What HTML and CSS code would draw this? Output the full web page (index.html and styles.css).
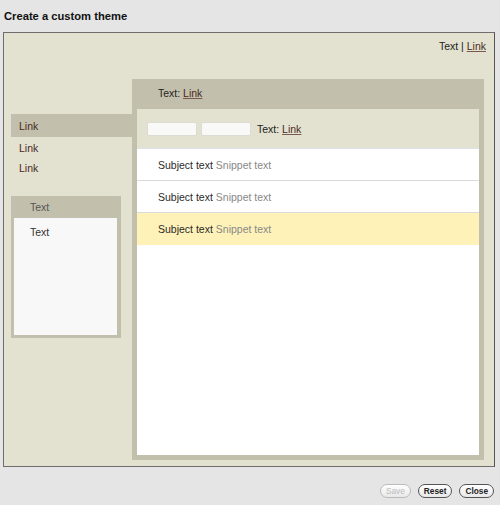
FILE: index.html
```html
<!DOCTYPE html>
<html>
<head>
<meta charset="utf-8">
<link rel="stylesheet" href="styles.css">
</head>
<body>
<div class="title">Create a custom theme</div>
<div class="frame">
  <div class="topbar">Text | <a class="lnk">Link</a></div>
  <div class="content">
    <div class="leftcol">
      <div class="nav">
        <div class="nav-item selected"><a class="lnk plain">Link</a></div>
        <div class="nav-item"><a class="lnk plain">Link</a></div>
        <div class="nav-item"><a class="lnk plain">Link</a></div>
      </div>
      <div class="box">
        <div class="box-head">Text</div>
        <div class="box-body">Text</div>
      </div>
    </div>
    <div class="panel">
      <div class="panel-head">Text: <a class="lnk">Link</a></div>
      <div class="panel-inner">
        <div class="toolbar">
          <span class="inp"></span>
          <span class="inp"></span>
          <span class="tb-text">Text: <a class="lnk">Link</a></span>
        </div>
        <div class="list">
          <div class="row"><span class="subj">Subject text</span> <span class="snip">Snippet text</span></div>
          <div class="row"><span class="subj">Subject text</span> <span class="snip">Snippet text</span></div>
          <div class="row hl"><span class="subj">Subject text</span> <span class="snip">Snippet text</span></div>
        </div>
      </div>
    </div>
  </div>
</div>
<div class="footer">
  <span class="btn disabled">Save</span>
  <span class="btn">Reset</span>
  <span class="btn">Close</span>
</div>
</body>
</html>
```

FILE: styles.css
```css
html, body {
  margin: 0;
  padding: 0;
}
body {
  background: #e5e5e5;
  font-family: "Liberation Sans", Arial, sans-serif;
  font-size: 10.5px;
  color: #222;
  width: 500px;
  height: 505px;
  overflow: hidden;
}
.title {
  height: 32px;
  box-sizing: border-box;
  padding: 10px 0 0 4px;
  font-size: 11.2px;
  font-weight: bold;
  color: #111;
}
.frame {
  margin-left: 3px;
  width: 492px;
  height: 435px;
  box-sizing: border-box;
  border: 1px solid #6e6e6e;
  border-right-color: #555;
  background: #e3e1cf;
  display: flex;
  flex-direction: column;
}
.topbar {
  height: 46px;
  box-sizing: border-box;
  padding: 7px 8px 0 0;
  text-align: right;
  color: #222;
}
.lnk {
  color: #4a2b1f;
  text-decoration: underline;
  text-decoration-color: #7a5a4e;
}
.lnk.plain {
  text-decoration: none;
}
.content {
  display: flex;
  flex: 1;
  padding-left: 7px;
}
.leftcol {
  width: 121px;
  display: flex;
  flex-direction: column;
  padding-top: 35px;
}
.nav-item {
  height: 20px;
  line-height: 20px;
  padding-left: 8px;
}
.nav-item.selected {
  height: 23px;
  line-height: 24px;
  background: #c2c0ac;
  margin-bottom: 1px;
}
.box {
  margin-top: 18px;
  width: 110px;
  height: 142px;
  box-sizing: border-box;
  background: #c2c0ac;
  padding: 0 4px 3px 3px;
  display: flex;
  flex-direction: column;
}
.box-head {
  height: 22px;
  line-height: 23px;
  padding-left: 16px;
  color: #555;
}
.box-body {
  flex: 1;
  background: #f8f8f8;
  padding: 8px 0 0 16px;
  color: #333;
}
.panel {
  width: 352px;
  height: 381px;
  box-sizing: border-box;
  background: #c2c0ac;
  padding: 0 5px 5px;
  display: flex;
  flex-direction: column;
}
.panel-head {
  height: 30px;
  line-height: 29px;
  padding-left: 21px;
}
.panel-inner {
  flex: 1;
  display: flex;
  flex-direction: column;
  background: #fff;
}
.toolbar {
  height: 40px;
  background: #e3e1cf;
  border-bottom: 1px solid #dbe4ea;
  display: flex;
  align-items: center;
  padding-left: 10px;
  padding-top: 1px;
  box-sizing: border-box;
  gap: 4px;
}
.inp {
  width: 48px;
  height: 12px;
  background: #f9f9f7;
  border: 1px solid #dcdcd4;
  border-radius: 2px;
}
.tb-text {
  margin-left: 2px;
}
.row {
  height: 31px;
  line-height: 32px;
  border-bottom: 1px solid #dadada;
  padding-left: 21px;
}
.row.hl {
  background: #fff2b8;
  border-bottom-color: #fff2b8;
}
.subj {
  color: #2a2a2a;
}
.snip {
  color: #888;
}
.footer {
  display: flex;
  justify-content: flex-end;
  gap: 7px;
  padding: 17px 6px 0 0;
}
.btn {
  height: 12px;
  line-height: 12px;
  padding: 0 5px;
  border: 1px solid #555;
  border-radius: 7px;
  background: linear-gradient(#ffffff, #e8e8e8);
  font-size: 8.3px;
  font-weight: bold;
  color: #222;
}
.btn.disabled {
  border-color: #bbb;
  color: #bbb;
  font-weight: normal;
}
```
